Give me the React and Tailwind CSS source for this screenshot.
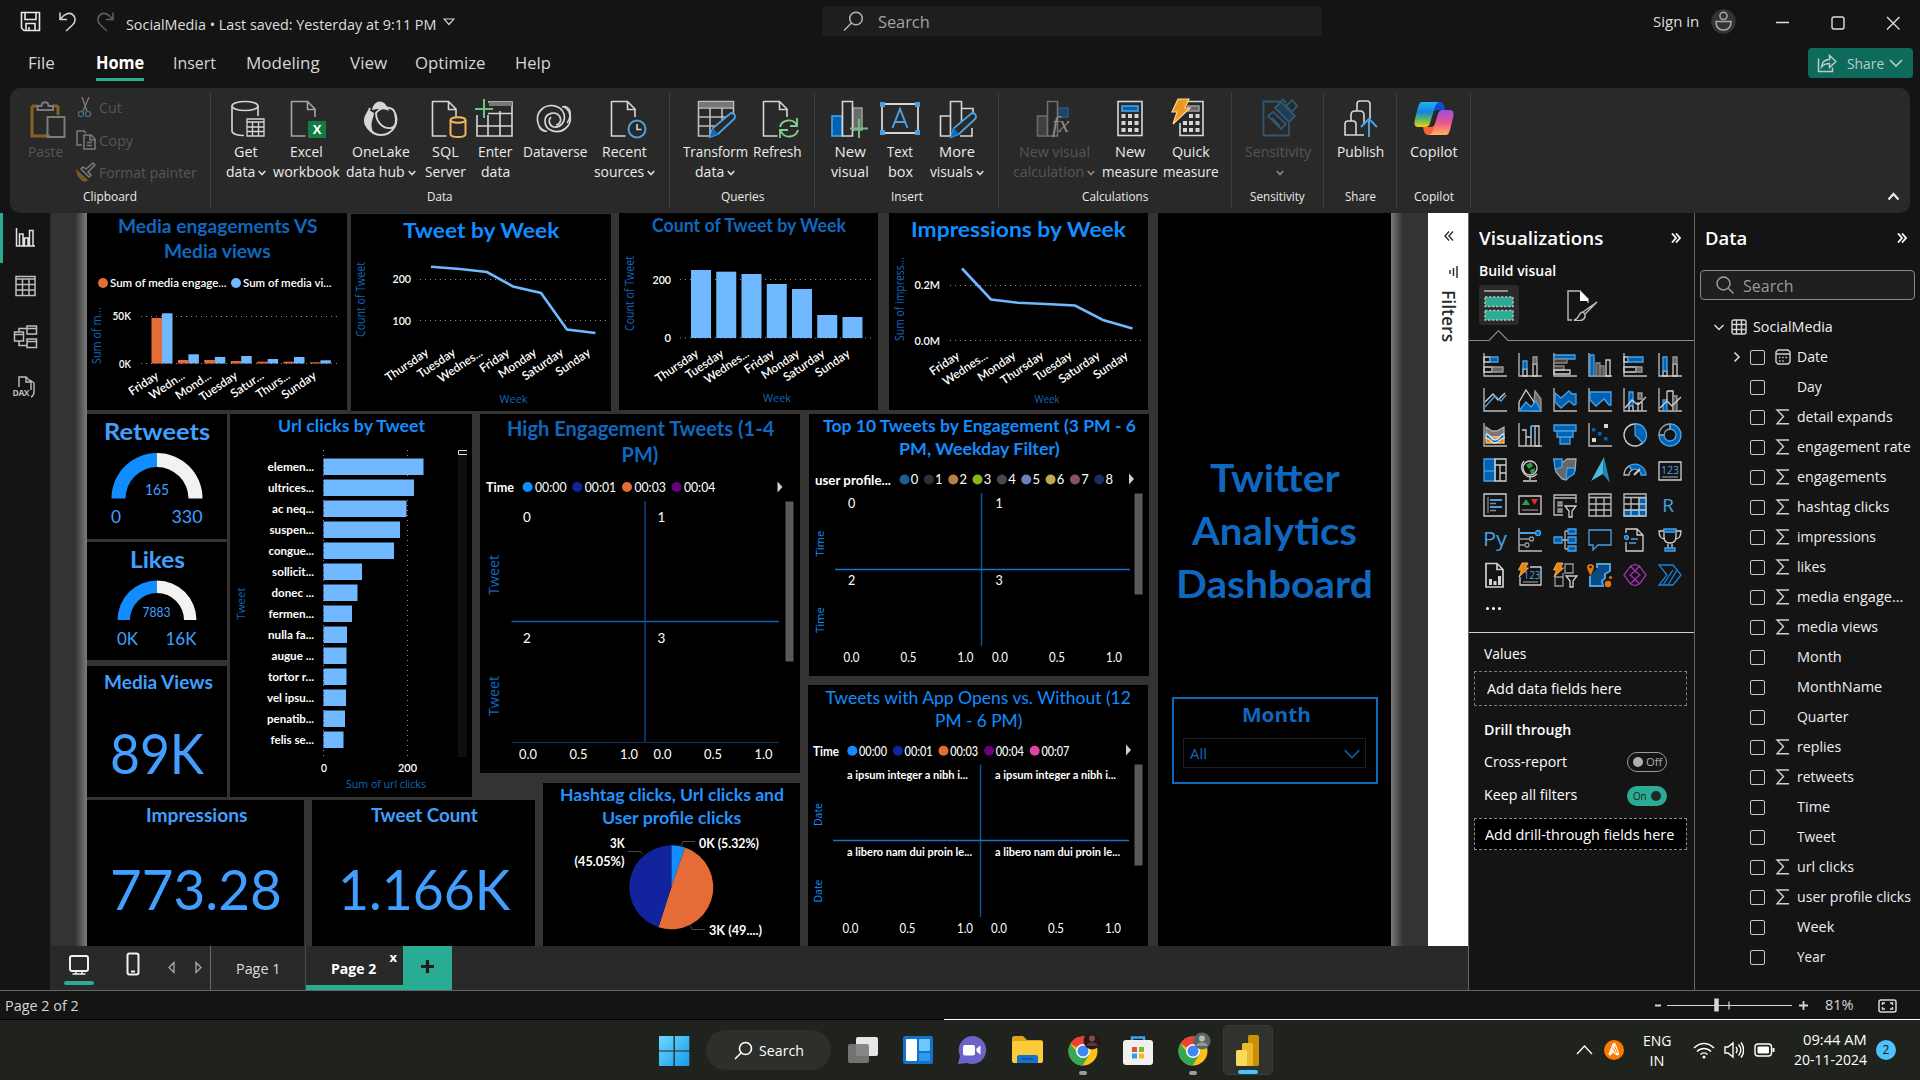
import { useLayoutEffect, useRef, useState } from "react";

const BRIGHT = "#118DFF";
const DIM = "#0F68BE";
const BAR = "#70B8FF";

/* Single-line text condensed or widened to occupy exactly `w` pixels. */
function T({ w, className = "", children }) {
  const ref = useRef(null);
  const [k, setK] = useState(1);
  useLayoutEffect(() => {
    if (ref.current && ref.current.offsetWidth) setK(w / ref.current.offsetWidth);
  }, [w, children]);
  return (
    <span className={"block shrink-0 whitespace-nowrap " + className} style={{ width: w }}>
      <span ref={ref} className="inline-block origin-left" style={{ transform: `scaleX(${k})` }}>
        {children}
      </span>
    </span>
  );
}

/* Text inside a chart; y is the vertical middle of the capitals. */
function X({ x, y, w, s = 12, a = "middle", c = "#fff", b = 600, r, ui, children }) {
  const t = r !== undefined ? `rotate(${r} ${x} ${y})` : undefined;
  return (
    <text
      x={x}
      y={y + s * 0.36}
      fontSize={s}
      fontWeight={b}
      fill={c}
      textAnchor={a}
      textLength={w}
      lengthAdjust="spacingAndGlyphs"
      fontFamily={ui ? "Open Sans, Noto Sans, sans-serif" : "Lato, Open Sans, sans-serif"}
      transform={t}
    >
      {children}
    </text>
  );
}

function Tile({ className, children }) {
  return <div className={"shrink-0 overflow-hidden bg-black flex flex-col items-center font-[Lato,sans-serif] " + className}>{children}</div>;
}

function Plot({ x, y, w, h, children }) {
  return (
    <svg className="block shrink-0" width={w} height={h} viewBox={`${x} ${y} ${w} ${h}`}>
      {children}
    </svg>
  );
}

function Dots({ x1, x2, y }) {
  return <line x1={x1} x2={x2} y1={y} y2={y} stroke="#8a8a8a" strokeWidth="1" strokeDasharray="1 4" />;
}

function DayLabels({ items, x, step, y }) {
  return items.map(([d, w], i) => (
    <X key={i} x={x + i * step} y={y} w={w} a="end" r={-34} s={12} b={600}>
      {d}
    </X>
  ));
}

/* ---------- title bar ---------- */
function TitleBar() {
  return (
    <div className="h-[42px] shrink-0 flex items-start">
      <div className="flex w-[822px] pl-[20px] pt-[11px]">
        <svg width="21" height="21" viewBox="0 0 21 21" fill="none" stroke="#e8e8e8" strokeWidth="1.6">
          <path d="M1.5 1.5h18v18H4L1.500 17z M5 1.500v7h11v-7 M6 19.500v-7h9v7 M9 16v3" />
        </svg>
        <svg className="ml-[17px]" width="20" height="21" viewBox="0 0 20 21" fill="none" stroke="#d0d0d0" strokeWidth="1.6">
          <path d="M2 1.500v7h7 M2.500 8C6 3 11 1 14.500 3.500s3.500 7 0 10.500L8 20" />
        </svg>
        <svg className="ml-[17px]" width="20" height="21" viewBox="0 0 20 21" fill="none" stroke="#5e5e5e" strokeWidth="1.6">
          <path d="M18 1.500v7h-7 M17.500 8C14 3 9 1 5.500 3.500s-3.500 7 0 10.500L12 20" />
        </svg>
        <T w={310} className="ml-[11px] mt-[3px] text-[15px] leading-[21px] text-[#dedede]">SocialMedia • Last saved: Yesterday at 9:11 PM</T>
        <svg className="ml-[7px] mt-[7px]" width="12" height="8" viewBox="0 0 12 8" fill="none" stroke="#cfcfcf" strokeWidth="1.200">
          <path d="M1 1h10L6 6.500z" />
        </svg>
      </div>
      <div className="mt-[6px] flex h-[30px] w-[500px] items-center rounded-[3px] bg-[#1e1e1e] pl-[21px]">
        <svg width="21" height="21" viewBox="0 0 21 21" fill="none" stroke="#b5b5b5" strokeWidth="1.500">
          <circle cx="13" cy="7.500" r="6.300" />
          <path d="M8.500 12L1 19.500" />
        </svg>
        <T w={52} className="ml-[14px] mt-[2px] text-[16px] leading-[22px] text-[#a3a3a3]">Search</T>
      </div>
      <T w={46} className="ml-[331px] mt-[11px] text-[15px] leading-[21px] text-[#dedede]">Sign in</T>
      <svg className="ml-[12px] mt-[9px]" width="25" height="25" viewBox="0 0 25 25" fill="none" stroke="#a8a8a8" strokeWidth="1.500">
        <circle cx="12.500" cy="12.500" r="12.200" fill="#333" stroke="none" />
        <circle cx="12.500" cy="6.800" r="3.600" />
        <path d="M5 12.500h15c0 6-3 8.500-7.500 8.500S5 18.500 5 12.500z" />
      </svg>
      <svg className="ml-[40px] mt-[14px]" width="124" height="18" viewBox="0 0 124 18" fill="none" stroke="#dedede" strokeWidth="1.400">
        <path d="M0 8.500h13 M111 3L123.500 15.500 M123.500 3L111 15.500" />
        <rect x="56" y="3" width="12" height="12" rx="2" />
      </svg>
    </div>
  );
}

function MenuBar() {
  return (
    <div className="h-[46px] shrink-0 flex text-[17px] leading-[24px] text-[#d6d6d6]">
      <T w={27} className="ml-[28px] mt-[9px]">File</T>
      <div className="ml-[41px] mt-[9px] border-b-[3px] border-[#2aac94] h-[30px]">
        <T w={48} className="font-bold text-white">Home</T>
      </div>
      <T w={43} className="ml-[29px] mt-[9px]">Insert</T>
      <T w={74} className="ml-[30px] mt-[9px]">Modeling</T>
      <T w={37} className="ml-[30px] mt-[9px]">View</T>
      <T w={71} className="ml-[28px] mt-[9px]">Optimize</T>
      <T w={36} className="ml-[29px] mt-[9px]">Help</T>
      <div className="ml-[1257px] mt-[6px] flex h-[30px] w-[105px] items-center rounded-[4px] bg-[#0e6a5a] pl-[9px]">
        <svg width="20" height="20" viewBox="0 0 20 20" fill="none" stroke="#b9cdc9" strokeWidth="1.500">
          <path d="M1.500 5.500v13h14v-4 M4.500 14c.5-5 3.500-7.500 8-7.500V2.500l6.500 6-6.500 6V10.500c-4 0-6 1-8 3.500z" />
        </svg>
        <T w={37} className="ml-[10px] -mt-[1px] text-[15px] leading-[22px] text-[#b9cdc9]">Share</T>
        <svg className="ml-[5px] mt-[1px]" width="14" height="9" viewBox="0 0 14 9" fill="none" stroke="#b9cdc9" strokeWidth="1.600">
          <path d="M1 1l6 6 6-6" />
        </svg>
      </div>
    </div>
  );
}

/* ---------- ribbon ---------- */
const Caret = ({ c = "#dcdcdc" }) => (
  <svg className="ml-[3px] mt-[3px] shrink-0" width="8" height="6" viewBox="0 0 8 6" fill="none" stroke={c} strokeWidth="1.600">
    <path d="M.7 1L4 4.600 7.300 1" />
  </svg>
);

function RB({ ml, w, a, aw, b, bw, caret, off, icon }) {
  const col = off ? "text-[#565656]" : "text-[#ebebeb]";
  return (
    <div className={"shrink-0 flex flex-col items-center text-[15px] leading-[20px] " + col} style={{ marginLeft: ml, width: w }}>
      <svg width="44" height="42" viewBox="0 0 44 42" fill="none" stroke="#d6d6d6" strokeWidth="1.600" className="mb-[3px] mt-[3px] shrink-0 overflow-visible">
        {icon}
      </svg>
      <T w={aw}>{a}</T>
      <div className="flex items-center h-[20px]">
        {b && <T w={bw}>{b}</T>}
        {caret && <Caret c={off ? "#8a8a8a" : "#dcdcdc"} />}
      </div>
    </div>
  );
}

function Group({ w, name, nw, children }) {
  return (
    <div className="shrink-0 flex h-[115px] flex-col border-r border-[#3e3e3e]" style={{ width: w }}>
      <div className="flex h-[93px]">{children}</div>
      <div className="flex justify-center">
        <T w={nw} className="text-[13px] leading-[20px] text-[#ebebeb]">{name}</T>
      </div>
    </div>
  );
}

const docPath = "M7.500 5.500h16l7.500 7.500v8 M23.500 5.500v8H31 M7.500 5v35h14";

function Ribbon() {
  return (
    <div className="mx-[10px] h-[125px] shrink-0 flex rounded-[10px] bg-[#292929] pt-[5px] relative z-10">
      <Group w={201} name="Clipboard" nw={54}>
        <div className="ml-[16px] flex w-[38px] flex-col items-center text-[15px] leading-[20px] text-[#565656]">
          <svg width="38" height="42" viewBox="0 0 38 42" fill="none" strokeWidth="2" className="relative left-[3px] mb-[3px] mt-[3px] shrink-0">
            <path d="M3 10v30h18 M29 10v9" stroke="#8a6125" strokeWidth="3" />
            <path d="M3 10h6 M23 10h6" stroke="#8a6125" strokeWidth="3" />
            <path d="M8.500 14V10h4c0-5 7-5 7 0h4.500v4z" stroke="#7b7b7b" />
            <rect x="18.500" y="21" width="17" height="20" stroke="#7b7b7b" />
          </svg>
          <T w={35}>Paste</T>
        </div>
        <div className="ml-[12px] flex flex-col text-[15px] leading-[20px] text-[#565656]">
          <div className="mt-[4px] flex h-[20px] items-center">
            <svg width="20" height="20" viewBox="0 0 20 20" fill="none" strokeWidth="1.400">
              <path d="M6 0l5 14 M13 0L7 14" stroke="#7b7b7b" />
              <circle cx="5" cy="17" r="2.600" stroke="#3e6d8e" />
              <circle cx="12" cy="17" r="2.600" stroke="#3e6d8e" />
            </svg>
            <T w={23} className="ml-[3px]">Cut</T>
          </div>
          <div className="mt-[13px] flex h-[20px] items-center">
            <svg width="20" height="20" viewBox="0 0 20 20" fill="none" stroke="#7b7b7b" strokeWidth="1.500">
              <path d="M6 15H1V1h7l2 2 M8 19V5h7l4 4v10z M14 5v5h5 M11 12.500h5 M11 15.500h5" />
            </svg>
            <T w={34} className="ml-[3px]">Copy</T>
          </div>
          <div className="mt-[12px] flex h-[20px] items-center">
            <svg width="20" height="20" viewBox="0 0 20 20" fill="none" strokeWidth="1.500">
              <path d="M1 9l10 9-2 1c-4-1-7-5-8-10z" fill="#7d5a2a" stroke="#7d5a2a" />
              <path d="M5 7l8 8 2-2-3-3 7-7-2-2-7 6-3-2z" stroke="#7b7b7b" />
            </svg>
            <T w={98} className="ml-[3px]">Format painter</T>
          </div>
        </div>
      </Group>

      <Group w={459} name="Data" nw={26}>
        <RB ml={10} w={50} a="Get" aw={24} b="data" bw={29} caret icon={
          <g>
            <ellipse cx="21" cy="10" rx="13" ry="4.500" />
            <path d="M8 10v25c0 2.500 5 4.500 12 4.500 M34 10v10" />
            <path d="M23 23h17v17H23z M23 26h17 M23 31h17 M23 35.500h17 M28.500 26v14 M34.500 26v14" strokeWidth="1.300" />
          </g>} />
        <RB ml={0} w={70} a="Excel" aw={33} b="workbook" bw={67} icon={
          <g>
            <path d={docPath} stroke="#a5a5a5" />
            <rect x="24" y="25" width="18" height="17" fill="#127c41" stroke="none" />
            <text x="33" y="38" fontSize="13" fontWeight="700" fill="#fff" stroke="none" textAnchor="middle" fontFamily="Open Sans">X</text>
          </g>} />
        <RB ml={2} w={75} a="OneLake" aw={58} b="data hub" bw={59} caret icon={
          <g>
            <path d="M13 14c2-11 13-12 17 1-6-3-12-2-17-1z" fill="#d6d6d6" stroke="none" />
            <path d="M10 14c-9 9-5 19 6 25-7-10-1-17-1-22z" fill="#d6d6d6" stroke="none" />
            <path d="M11 12C3 26 11 39 22 39s20-12 13-24c-3-5-14-4-18 2 0 8 6 16 15 15 5-1 6-7 4-14" strokeWidth="1.900" />
          </g>} />
        <RB ml={2} w={50} a="SQL" aw={27} b="Server" bw={41} icon={
          <g transform="translate(2 0)">
            <path d={docPath} />
            <ellipse cx="33" cy="24" rx="7.500" ry="2.800" stroke="#f0b45c" strokeWidth="2" />
            <path d="M25.500 24v14c0 4 15 4 15 0V24" stroke="#f0b45c" strokeWidth="2" />
          </g>} />
        <RB ml={-1} w={52} a="Enter" aw={34} b="data" bw={29} icon={
          <g>
            <path d="M4 19v21h35V6H15 M4 30h35 M15 19v21 M27 15v25 M15 17.500h24" />
            <path d="M16 6h23v4H16z" fill="#777" stroke="none" />
            <path d="M11 3v19 M2 13h18" stroke="#6fc37c" strokeWidth="2" />
          </g>} />
        <RB ml={-1} w={70} a="Dataverse" aw={65} icon={
          <g>
            <path d="M31 11c7 3 9 15 2 21-8 7-21 3-21-7 0-8 11-11 15-4 2 4-1 8-4 8" strokeWidth="1.700" />
            <path d="M12 35c-9-4-10-16-3-22 7-6 19-4 22 5 2 8-4 14-10 13-5-1-6-7-3-10" strokeWidth="1.700" />
            <path d="M29 11c3-1 7 0 8 4s-1 10-3 12 M14 35c-3 1-7-1-8-5" strokeWidth="1.500" />
          </g>} />
        <RB ml={0} w={69} a="Recent" aw={45} b="sources" bw={50} caret icon={
          <g transform="translate(1 0)">
            <path d={docPath} />
            <circle cx="33" cy="33" r="8.500" stroke="#4ba0e0" strokeWidth="2" />
            <path d="M33 28v5.500h4.500" />
          </g>} />
      </Group>

      <Group w={145} name="Queries" nw={43}>
        <RB ml={10} w={70} a="Transform" aw={65} b="data" bw={29} caret icon={
          <g transform="translate(1 0)">
            <path d="M4.500 5.500h35v14 M4.500 5v35h13 M4.500 12h35 M4.500 21h30 M4.500 30h20 M16 12v28 M28 12v14" stroke="#bdbdbd" />
            <path d="M5 6h34v5H5z" fill="#777" stroke="none" />
            <path d="M16 41l3-9 18-15c4 0 5 4 3 6L24 38z" fill="#292929" stroke="#4ba0e0" strokeWidth="1.800" />
            <path d="M16 41l3-9 5 6z" fill="#0d6cbd" stroke="none" />
          </g>} />
        <RB ml={1} w={52} a="Refresh" aw={49} icon={
          <g transform="translate(1 0)">
            <path d={docPath} />
            <path d="M24 31c2-8 14-9 17-1 M41 22v8h-7 M42 34c-2 8-14 9-17 1 M24 42v-8h8" stroke="#7fd18d" strokeWidth="1.800" />
          </g>} />
      </Group>

      <Group w={184} name="Insert" nw={32}>
        <RB ml={13} w={44} a="New" aw={31} b="visual" bw={38} icon={
          <g>
            <rect x="4" y="20" width="10" height="20" fill="#0062b4" stroke="#4ba0e0" />
            <rect x="25" y="12" width="9" height="22" fill="#6b6b6b" stroke="#999" />
            <path d="M14.500 40V5.500h10V40z" fill="#292929" />
            <path d="M31 23v19 M22 32.500h18" stroke="#6fc37c" strokeWidth="2" />
          </g>} />
        <RB ml={6} w={44} a="Text" aw={26} b="box" bw={25} icon={
          <g>
            <path d="M4 8h36v29H4z" strokeWidth="1.800" />
            <path d="M2 6h5v5H2z M37 6h5v5h-5z M2 34h5v5H2z M37 34h5v5h-5z" fill="#4ba0e0" stroke="none" />
            <path d="M14.500 32l7.500-19 7.500 19 M17 26h10" stroke="#4ba0e0" strokeWidth="2" />
          </g>} />
        <RB ml={7} w={56} a="More" aw={36} b="visuals" bw={43} caret icon={
          <g transform="translate(1 0)">
            <path d="M14.500 40H4.500V20h10 M14.500 40V5.500h11V26 M26 12.500h11v6 M24 40h12v-8" />
            <path d="M15 41l3-9 18-15c4 0 5 4 3 6L23 38z" fill="#292929" stroke="#4ba0e0" strokeWidth="1.800" />
            <path d="M15 41l3-9 5 6z" fill="#0d6cbd" stroke="none" />
          </g>} />
      </Group>

      <Group w={233} name="Calculations" nw={66}>
        <RB ml={13} w={84} off a="New visual" aw={71} b="calculation" bw={71} caret icon={
          <g transform="translate(1 0)">
            <rect x="4.500" y="20" width="10" height="20" fill="#3f3f3f" stroke="#6a6a6a" />
            <rect x="25" y="12" width="10" height="9" fill="#1d4468" stroke="#28567d" />
            <path d="M14.500 40V5.500h10V40z" fill="#292929" stroke="#6f6f6f" />
            <text x="19" y="36" fontSize="24" fontStyle="italic" fill="#8b8b8b" stroke="none" fontFamily="Liberation Serif">fx</text>
          </g>} />
        <RB ml={4} w={60} a="New" aw={30} b="measure" bw={56} icon={
          <g>
            <rect x="10" y="5.500" width="24" height="34" />
            <rect x="14" y="10" width="16" height="5" fill="#0062b4" stroke="#4ba0e0" />
            <path d="M13.500 18h4v4h-4z M20 18h4v4h-4z M26.500 18h4v4h-4z M13.500 25h4v4h-4z M20 25h4v4h-4z M26.500 25h4v4h-4z M13.500 32h4v4h-4z M20 32h4v4h-4z M26.500 32h4v4h-4z" fill="#d6d6d6" stroke="none" />
          </g>} />
        <RB ml={1} w={60} a="Quick" aw={38} b="measure" bw={56} icon={
          <g>
            <path d="M18 5.500h16v34H11V27" />
            <rect x="19" y="10" width="11" height="5" fill="#666" stroke="#999" />
            <path d="M14 25h4v4h-4z M20 18h4v4h-4z M26.500 18h4v4h-4z M20 25h4v4h-4z M26.500 25h4v4h-4z M14 32h4v4h-4z M20 32h4v4h-4z M26.500 32h4v4h-4z" fill="#d6d6d6" stroke="none" />
            <path d="M9 3h11l-4 9h5L4 28l4-12H3z" fill="#ec9823" stroke="#ffd990" strokeWidth="1.200" />
          </g>} />
      </Group>

      <Group w={92} name="Sensitivity" nw={55}>
        <RB ml={9} w={74} off a="Sensitivity" aw={66} caret icon={
          <g stroke="#2f5873" strokeWidth="1.800" transform="translate(2 0)">
            <path d="M24 5.500H5.500v34H31V27" />
            <path d="M10 20l5-4 13 12-5 5z M14 22l8 8" />
            <path d="M17 12l6-6 14 14-6 6z" fill="#203e52" />
            <path d="M28 10l6-6 5 6-5 6z M24 3l4 4" />
          </g>} />
      </Group>
      <Group w={73} name="Share" nw={31}>
        <RB ml={11} w={50} a="Publish" aw={47} icon={
          <g transform="translate(2 0)">
            <path d="M5 39V28c0-2 1-3 3-3h5c2 0 3 1 3 3v11z M11 25v-6c0-3 2-4 4-4h5c2 0 4 1 4 4v9 M17 15V8c0-2 1-3 3-3h7c2 0 3 1 3 3v15 M16 39h8" />
            <path d="M29 41V23 M21 31l8-8 8 8" stroke="#4ba0e0" strokeWidth="2" />
          </g>} />
      </Group>
      <Group w={74} name="Copilot" nw={40}>
        <RB ml={12} w={50} a="Copilot" aw={48} icon={
          <g stroke="none">
            <defs>
              <linearGradient id="cpA" x1="0" y1="0" x2="0" y2="1">
                <stop offset="0" stopColor="#22b4f5" /><stop offset=".4" stopColor="#1583e0" /><stop offset=".7" stopColor="#5cb861" /><stop offset="1" stopColor="#f7d10a" />
              </linearGradient>
              <linearGradient id="cpB" x1="0" y1="0" x2="0" y2="1">
                <stop offset="0" stopColor="#9b4fe8" /><stop offset=".5" stopColor="#e8558c" /><stop offset="1" stopColor="#ffb35a" />
              </linearGradient>
            </defs>
            <path d="M22 6h6c3 0 4 2 5 8h-7c-4 0-5 2-6 5z" fill="#0b50d0" />
            <path d="M22 39h-6c-3 0-4-3-5-8h8c3 0 4-3 5-6z" fill="#f4623a" />
            <path d="M10 6h17c-3 1-4 4-5 8l-4 13c-1 3-2 4-5 4H6c-4 0-4-4-3-8l3-12c1-3 2-5 4-5z" fill="url(#cpA)" />
            <path d="M34 39H17c3-1 4-4 5-8l4-13c1-3 2-4 5-4h7c4 0 4 4 3 8l-3 12c-1 3-2 5-4 5z" fill="url(#cpB)" />
          </g>} />
      </Group>
      <div className="flex flex-1 items-end justify-end pb-[12px] pr-[10px]">
        <svg width="13" height="9" viewBox="0 0 13 9" fill="none" stroke="#e8e8e8" strokeWidth="2.200">
          <path d="M1.500 7.500l5-5.500 5 5.500" />
        </svg>
      </div>
    </div>
  );
}

/* ---------- left rail ---------- */
function Rail() {
  return (
    <div className="w-[51px] shrink-0 border-r border-[#2c2c2c] flex flex-col">
      <div className="flex h-[50px] border-l-[3px] border-[#2aac94] pl-[12px] pt-[14px]">
        <svg width="22" height="22" viewBox="0 0 22 22" fill="none" stroke="#e0e0e0" strokeWidth="1.500">
          <path d="M1.500 1v18H20 M4.500 19V7h3.500v12 M9.500 19v-8H13v8 M14.500 19V3.500H18V19" />
        </svg>
      </div>
      <svg className="ml-[15px] mt-[12px]" width="21" height="22" viewBox="0 0 21 22" fill="none" stroke="#bdbdbd" strokeWidth="1.500">
        <path d="M1 1.500h19v19H1z M1 4h19 M1 9.500h19 M1 15h19 M7.500 4v16 M14 4v16" />
      </svg>
      <svg className="ml-[13px] mt-[27px]" width="25" height="25" viewBox="0 0 25 25" fill="none" stroke="#bdbdbd" strokeWidth="1.500">
        <path d="M1.500 8h9v9h-9z M1.500 10.500h9 M14 2h9.500v8H14z M14 4.500h9.500 M14 15h9.500v8.500H14z M14 17.500h9.500 M6 8V4.500h8 M6 17v4.500h8" />
      </svg>
      <svg className="ml-[12px] mt-[26px]" width="26" height="26" viewBox="0 0 26 26" fill="none" stroke="#bdbdbd" strokeWidth="1.400">
        <path d="M7 12V2h7l5 5v8 M14 2v5h5 M18 5l4 3v9c0 3-1 4-3 5" />
        <text x="0.500" y="20.500" fontSize="8.500" fontWeight="700" fill="#bdbdbd" stroke="none" textLength="17" fontFamily="Open Sans">DAX</text>
      </svg>
    </div>
  );
}

/* ---------- report visuals ---------- */
function MediaChart() {
  const or = [318, 360, 360, 361, 361.7, 361.7, 362.3];
  const bl = [313.300, 354.300, 357, 356, 359, 357, 360.300];
  return (
    <Tile className="w-[260px] h-[197px]">
      <T w={199} className="text-[19px] font-bold leading-[25px] text-[#0f68be]">Media engagements VS</T>
      <T w={107} className="text-[19px] font-bold leading-[25px] text-[#0f68be]">Media views</T>
      <div className="mt-[10px] flex h-[20px] w-full items-center pl-[11px] text-[12px] font-semibold text-white">
        <span className="size-[10px] rounded-full bg-[#e66c37]" />
        <T w={116} className="ml-[2px]">Sum of media engage...</T>
        <span className="ml-[5px] size-[10px] rounded-full bg-[#70b8ff]" />
        <T w={88} className="ml-[2px]">Sum of media vi...</T>
      </div>
      <Plot x={87} y={293} w={260} h={117}>
        <X x={97} y={335.500} w={57} r={-90} s={12} c={DIM} b={400} ui>Sum of m...</X>
        <X x={131} y={316} w={18.500} a="end">50K</X>
        <X x={131} y={364} w={12} a="end">0K</X>
        <Dots x1={141} x2={341} y={316.500} />
        <Dots x1={141} x2={341} y={363.500} />
        {or.map((t, i) => <rect key={i} x={151.500 + i * 26.400} y={t} width="10.500" height={363.500 - t} fill="#E66C37" />)}
        {bl.map((t, i) => <rect key={i} x={162 + i * 26.400} y={t} width="10.500" height={363.500 - t} fill={BAR} />)}
        <DayLabels x={157} step={26.300} y={374} items={[["Friday", 33], ["Wedn...", 40], ["Mond...", 40], ["Tuesday", 43], ["Satur...", 37], ["Thurs...", 38], ["Sunday", 39]]} />
      </Plot>
    </Tile>
  );
}

const WEEK_A = [["Thursday", 49], ["Tuesday", 43], ["Wednes...", 51], ["Friday", 33], ["Monday", 43], ["Saturday", 47], ["Sunday", 39]];

function TweetWeek() {
  return (
    <Tile className="mt-px w-[260px] h-[197px]">
      <T w={156} className="mt-[2px] text-[21px] font-bold leading-[28px] text-[#118dff]">Tweet by Week</T>
      <Plot x={351} y={244} w={260} h={167}>
        <X x={361} y={299.500} w={75} r={-90} s={12} c={DIM} b={400} ui>Count of Tweet</X>
        <X x={411} y={279} w={18.500} a="end">200</X>
        <X x={411} y={321} w={18.500} a="end">100</X>
        <Dots x1={420} x2={606} y={279.500} />
        <Dots x1={420} x2={606} y={320.500} />
        <path d="M431 266.700L460 269 487 272 513 286.500 541 293 567 329.500 595.500 333" fill="none" stroke={BAR} strokeWidth="2.600" />
        <DayLabels x={427} step={27} y={351} items={WEEK_A} />
        <X x={513.500} y={399} w={28} s={11} c={DIM} b={400} ui>Week</X>
      </Plot>
    </Tile>
  );
}

function CountWeek() {
  const tops = [270, 271.700, 274, 284, 289, 315, 317];
  return (
    <Tile className="w-[259px] h-[197px]">
      <T w={194} className="mt-px text-[18px] font-bold leading-[23px] text-[#0f68be]">Count of Tweet by Week</T>
      <Plot x={619} y={237} w={259} h={173}>
        <X x={630} y={293.500} w={75} r={-90} s={12} c={DIM} b={400} ui>Count of Tweet</X>
        <X x={671} y={280} w={18.500} a="end">200</X>
        <X x={671} y={338} w={6.500} a="end">0</X>
        <Dots x1={680} x2={871} y={279.500} />
        <Dots x1={680} x2={871} y={338} />
        {tops.map((t, i) => <rect key={i} x={691 + i * 25.250} y={t} width="20" height={338 - t} fill={BAR} />)}
        <DayLabels x={697} step={25.250} y={352} items={WEEK_A} />
        <X x={777} y={398} w={28} s={11} c={DIM} b={400} ui>Week</X>
      </Plot>
    </Tile>
  );
}

function ImprWeek() {
  return (
    <Tile className="w-[259px] h-[197px]">
      <T w={215} className="mt-[2px] text-[21px] font-bold leading-[28px] text-[#118dff]">Impressions by Week</T>
      <Plot x={889} y={243} w={259} h={167}>
        <X x={900} y={299} w={84} r={-90} s={12} c={DIM} b={400} ui>Sum of impress...</X>
        <X x={940} y={285} w={25.500} a="end">0.2M</X>
        <X x={940} y={341} w={25.500} a="end">0.0M</X>
        <Dots x1={950} x2={1141} y={285.500} />
        <Dots x1={950} x2={1141} y={340.500} />
        <path d="M962 268.500L991 299.500 1018 302.700 1046 304 1075 305.500 1103 320 1132.500 328.500" fill="none" stroke={BAR} strokeWidth="2.600" />
        <DayLabels x={958} step={28.100} y={354} items={[WEEK_A[3], WEEK_A[2], WEEK_A[4], WEEK_A[0], WEEK_A[1], WEEK_A[5], WEEK_A[6]]} />
        <X x={1047} y={399} w={25} s={11} c={DIM} b={400} ui>Week</X>
      </Plot>
    </Tile>
  );
}

function Arc({ cx, cy, R, r }) {
  return (
    <g>
      <path d={`M${cx - R} ${cy}A${R} ${R} 0 0 1 ${cx} ${cy - R}V${cy - r}A${r} ${r} 0 0 0 ${cx - r} ${cy}z`} fill={BRIGHT} />
      <path d={`M${cx + R} ${cy}A${R} ${R} 0 0 0 ${cx} ${cy - R}V${cy - r}A${r} ${r} 0 0 1 ${cx + r} ${cy}z`} fill="#f3f2f1" />
    </g>
  );
}

const CARD = "#41A0FF";

function Kpis() {
  return (
    <div className="flex w-[140px] shrink-0 flex-col">
      <Tile className="w-[140px] h-[125px]">
        <T w={106} className="mt-[3px] text-[23px] font-bold leading-[28px] text-[#41a0ff]">Retweets</T>
        <Plot x={87} y={445} w={140} h={94}>
          <Arc cx={157} cy={498.500} R={45.500} r={31.500} />
          <X x={157} y={490} w={24} s={14.500} c={CARD} b={400}>165</X>
          <X x={116} y={517} w={10} s={18} c={CARD} b={400}>0</X>
          <X x={187} y={517} w={31} s={18} c={CARD} b={400}>330</X>
        </Plot>
      </Tile>
      <Tile className="mt-[3px] w-[140px] h-[118px]">
        <T w={55} className="mt-[3px] text-[23px] font-bold leading-[28px] text-[#41a0ff]">Likes</T>
        <Plot x={87} y={573} w={140} h={87}>
          <Arc cx={157} cy={620} R={39.500} r={27} />
          <X x={156.500} y={612} w={28} s={13} c={CARD} b={400}>7883</X>
          <X x={127.500} y={638.500} w={21} s={17} c={CARD} b={400}>0K</X>
          <X x={181} y={638.500} w={31} s={17} c={CARD} b={400}>16K</X>
        </Plot>
      </Tile>
      <Tile className="mt-[6px] w-[140px] h-[131px]">
        <T w={109} className="mt-[4px] ml-[3px] text-[18px] font-bold leading-[24px] text-[#41a0ff]">Media Views</T>
        <T w={94} className="mt-[24px] text-[56px] leading-[70px] text-[#41a0ff]">89K</T>
      </Tile>
    </div>
  );
}

const URLS = [
  ["elemen...", 46.500, 423.500], ["ultrices...", 46, 414], ["ac neq...", 42, 406.500], ["suspen...", 44.500, 400], ["congue...", 45.500, 394],
  ["sollicit...", 42, 362], ["donec ...", 42.500, 357.500], ["fermen...", 45.500, 352], ["nulla fa...", 46, 347], ["augue ...", 42.500, 346.500],
  ["tortor r...", 46, 346.500], ["vel ipsu...", 47, 346], ["penatib...", 47, 345], ["felis se...", 43.500, 343.500],
];

function UrlChart() {
  return (
    <Tile className="ml-[3px] w-[242px] h-[383px]">
      <T w={147} className="text-[17.5px] font-bold leading-[23px] text-[#118dff]">Url clicks by Tweet</T>
      <Plot x={230} y={437} w={242} h={360}>
        <X x={240.500} y={603.500} w={32} r={-90} s={11.500} c={DIM} b={400} ui>Tweet</X>
        <line x1="323.500" x2="323.500" y1="450" y2="758" stroke="#8a8a8a" strokeDasharray="1 4" />
        <line x1="407.500" x2="407.500" y1="450" y2="758" stroke="#8a8a8a" strokeDasharray="1 4" />
        {URLS.map(([t, w, e], i) => (
          <g key={i}>
            <X x={314} y={466.700 + i * 21} w={w} a="end" b={700}>{t}</X>
            <rect x="323.500" y={458.500 + i * 21} width={e - 323.500} height="16.500" fill={BAR} />
          </g>
        ))}
        <rect x="458" y="450" width="9" height="307" fill="#0e0e0e" />
        <path d="M467 450.500h-8.500v4H467" fill="none" stroke="#ddd" />
        <X x={324} y={768} w={6}>0</X>
        <X x={407.500} y={768} w={19}>200</X>
        <X x={386} y={784} w={80} s={11} c={DIM} b={400} ui>Sum of url clicks</X>
      </Plot>
    </Tile>
  );
}

function Card({ className, title, tw, value, vw }) {
  return (
    <Tile className={className}>
      <T w={tw} className="mt-[3px] ml-[2px] text-[18px] font-bold leading-[24px] text-[#41a0ff]">{title}</T>
      <T w={vw} className="mt-[27px] text-[56px] leading-[70px] text-[#41a0ff]">{value}</T>
    </Tile>
  );
}

const TIME_COLORS = ["#118DFF", "#12239E", "#E66C37", "#6B007B", "#E044A7"];
const TIMES = ["00:00", "00:01", "00:03", "00:04", "00:07"];

function Arrow({ x, y }) {
  return <path d={`M${x} ${y - 5.500}v11l5-5.500z`} fill="#d0d0d0" />;
}

function Grid4({ vx, y1, y2, hx1, hx2, hy, ticks, ty, s, tw, c }) {
  return (
    <g>
      <line x1={vx} x2={vx} y1={y1} y2={y2} stroke={c} strokeWidth="1.400" opacity=".75" />
      <line x1={hx1} x2={hx2} y1={hy} y2={hy} stroke={c} strokeWidth="1.400" />
      {ticks.map((x, i) => <X key={i} x={x} y={ty} w={tw} s={s} b={400}>{["0.0", "0.5", "1.0"][i % 3]}</X>)}
    </g>
  );
}

function HighEngagement() {
  return (
    <Tile className="w-[320px] h-[359px]">
      <T w={267} className="mt-px text-[20px] font-bold leading-[26px] text-[#0f68be]">High Engagement Tweets (1-4</T>
      <T w={37} className="text-[20px] font-bold leading-[26px] text-[#0f68be]">PM)</T>
      <Plot x={480} y={467} w={320} h={306}>
        <X x={486} y={487.500} w={28} a="start" s={13.500} b={700}>Time</X>
        {[527.600, 577.300, 627, 676.500].map((x, i) => (
          <g key={i}>
            <circle cx={x} cy={487} r="5" fill={TIME_COLORS[i]} />
            <X x={x + 7.400} y={487.500} w={31.500} a="start" s={13.500} b={400}>{TIMES[i]}</X>
          </g>
        ))}
        <Arrow x={777.500} y={487} />
        <Grid4 vx={645} y1={501} y2={742.600} hx1={511.500} hx2={779} hy={621.500} ticks={[528, 578.500, 629, 662.500, 713, 763.500]} ty={754.500} s={13.500} tw={18} c="#1062b3" />
        <line x1="511.500" x2="779" y1="742.500" y2="742.500" stroke="#0b3763" />
        <X x={527} y={517.500} s={13.500} b={400}>0</X>
        <X x={661.500} y={517.500} s={13.500} b={400}>1</X>
        <X x={527} y={638.500} s={13.500} b={400}>2</X>
        <X x={661.500} y={638.500} s={13.500} b={400}>3</X>
        <X x={494} y={575} w={40} r={-90} s={14} c={DIM} b={400} ui>Tweet</X>
        <X x={494} y={696} w={40} r={-90} s={14} c={DIM} b={400} ui>Tweet</X>
        <rect x="785.500" y="501.500" width="8" height="160" fill="#5a5a5a" />
      </Plot>
    </Tile>
  );
}

const UP_COLORS = ["#1B5E93", "#2B2F3A", "#B98046", "#8AB51E", "#454852", "#6E80BB", "#C0A850", "#87535F", "#1D2C60"];

function TopTen() {
  return (
    <Tile className="ml-px w-[340px] h-[262px]">
      <T w={313} className="text-[17.5px] font-bold leading-[23px] text-[#118dff]">Top 10 Tweets by Engagement (3 PM - 6</T>
      <T w={161} className="text-[17.5px] font-bold leading-[23px] text-[#118dff]">PM, Weekday Filter)</T>
      <Plot x={809} y={460} w={340} h={216}>
        <X x={815} y={480} w={76} a="start" s={12.500} b={700}>user profile...</X>
        {UP_COLORS.map((c, i) => (
          <g key={i}>
            <circle cx={904.500 + i * 24.350} cy={479.500} r="5" fill={c} />
            <X x={914.500 + i * 24.350} y={479.500} s={13} b={400}>{i}</X>
          </g>
        ))}
        <Arrow x={1129} y={479} />
        <Grid4 vx={981.500} y1={493} y2={646} hx1={835} hx2={1130} hy={569.500} ticks={[851.500, 908.500, 965.500, 1000, 1057, 1114]} ty={657.200} s={12.500} tw={16} c="#1273d0" />
        <X x={851.500} y={503} s={12.500} b={400}>0</X>
        <X x={999} y={503} s={12.500} b={400}>1</X>
        <X x={851.500} y={580.200} s={12.500} b={400}>2</X>
        <X x={999} y={580.200} s={12.500} b={400}>3</X>
        <X x={820} y={543.500} w={26} r={-90} s={11.500} c={BRIGHT} b={400} ui>Time</X>
        <X x={820} y={620} w={26} r={-90} s={11.500} c={BRIGHT} b={400} ui>Time</X>
        <rect x="1134.500" y="493.500" width="8" height="101" fill="#5a5a5a" />
      </Plot>
    </Tile>
  );
}

function AppOpens() {
  return (
    <Tile className="mt-[9px] w-[340px] h-[261px]">
      <T w={305} className="mt-[1px] text-[17.5px] leading-[23px] text-[#118dff]">Tweets with App Opens vs. Without (12</T>
      <T w={87} className="text-[17.5px] leading-[23px] text-[#118dff]">PM - 6 PM)</T>
      <Plot x={808} y={732} w={340} h={214}>
        <X x={813} y={751} w={26} a="start" s={12.500} b={700}>Time</X>
        {TIMES.map((t, i) => (
          <g key={i}>
            <circle cx={852.300 + i * 45.600} cy={750.800} r="5" fill={TIME_COLORS[i]} />
            <X x={859 + i * 45.600} y={751} w={28} a="start" s={12.500} b={500}>{t}</X>
          </g>
        ))}
        <Arrow x={1126} y={750} />
        <Grid4 vx={980.500} y1={764.500} y2={917} hx1={833} hx2={1129} hy={840.500} ticks={[850.500, 907.500, 965, 999, 1056, 1113]} ty={928} s={12.500} tw={16} c="#1273d0" />
        <X x={847} y={774.500} w={121} a="start" s={11.500} b={700}>a ipsum integer a nibh i...</X>
        <X x={995} y={774.500} w={121} a="start" s={11.500} b={700}>a ipsum integer a nibh i...</X>
        <X x={847} y={851.500} w={125} a="start" s={11.500} b={700}>a libero nam dui proin le...</X>
        <X x={995} y={851.500} w={125} a="start" s={11.500} b={700}>a libero nam dui proin le...</X>
        <X x={818} y={814.500} w={23} r={-90} s={11.500} c={BRIGHT} b={400} ui>Date</X>
        <X x={818} y={891} w={23} r={-90} s={11.500} c={BRIGHT} b={400} ui>Date</X>
        <rect x="1134.500" y="764.500" width="8" height="101" fill="#5a5a5a" />
      </Plot>
    </Tile>
  );
}

function PieTile() {
  const cx = 671.300, cy = 887.300, R = 42;
  const pt = (f) => [cx + R * Math.sin(2 * Math.PI * f), cy - R * Math.cos(2 * Math.PI * f)].join(" ");
  const a = 0.0532, b = 0.5495;
  return (
    <Tile className="ml-auto mt-[10px] w-[257px] h-[163px]">
      <T w={224} className="text-[17.5px] font-bold leading-[23px] text-[#2492ff]">Hashtag clicks, Url clicks and</T>
      <T w={139} className="text-[17.5px] font-bold leading-[23px] text-[#2492ff]">User profile clicks</T>
      <Plot x={543} y={829} w={257} h={117}>
        <path d={`M${cx} ${cy}L${pt(0)}A${R} ${R} 0 0 1 ${pt(a)}z`} fill={BRIGHT} />
        <path d={`M${cx} ${cy}L${pt(a)}A${R} ${R} 0 0 1 ${pt(b)}z`} fill="#E66C37" />
        <path d={`M${cx} ${cy}L${pt(b)}A${R} ${R} 0 0 1 ${pt(0)}z`} fill="#12239E" />
        <path d="M681 847L683 841.500H695 M643 854L640 851.500H628 M690.500 925.500L692 929.500H705" fill="none" stroke="#4a4a4a" />
        <X x={624.500} y={843.500} w={14.500} a="end" s={13} b={700}>3K</X>
        <X x={624.500} y={861} w={50} a="end" s={13} b={700}>(45.05%)</X>
        <X x={699} y={843} w={60} a="start" s={13} b={700}>0K (5.32%)</X>
        <X x={709} y={930} w={53} a="start" s={13} b={700}>3K (49....)</X>
      </Plot>
    </Tile>
  );
}

function SidePanel() {
  return (
    <Tile className="ml-auto w-[233px] h-[733px] font-bold text-[#0f68be]">
      <T w={130} className="mt-[238px] text-[38px] leading-[53px]">Twitter</T>
      <T w={165} className="text-[38px] leading-[53px]">Analytics</T>
      <T w={197} className="text-[38px] leading-[53px]">Dashboard</T>
      <div className="mt-[87px] flex h-[87px] w-[206px] flex-col items-center border-2 border-[#0f68be]">
        <T w={69} className="ml-[3px] mt-[3px] font-['Open_Sans',sans-serif] text-[19px] leading-[26px]">Month</T>
        <div className="mt-[10px] flex h-[30px] w-[183px] items-center border border-[#1e1e1e] pl-[6px] pr-[5px]">
          <T w={17} className="mt-[2px] font-['Open_Sans',sans-serif] text-[14px] font-normal leading-[20px]">All</T>
          <svg className="ml-auto mt-[1px]" width="16" height="10" viewBox="0 0 16 10" fill="none" stroke="#0f68be" strokeWidth="1.400">
            <path d="M.7 1L8 8.700 15.300 1" />
          </svg>
        </div>
      </div>
    </Tile>
  );
}

function Report() {
  return (
    <div className="flex h-[733px] w-[1377px] shrink-0 bg-[#333333]">
      <div className="w-[24px] bg-[#333333]" />
      <div className="w-[12px] bg-linear-to-r from-[#333333] to-[#7c7c7c]" />
      <div className="flex w-[1304px]">
        <div className="flex w-[1062px] shrink-0 flex-col">
          <div className="flex h-[201px]">
            <MediaChart />
            <div className="w-[4px]" />
            <TweetWeek />
            <div className="w-[8px]" />
            <CountWeek />
            <div className="w-[11px]" />
            <ImprWeek />
          </div>
          <div className="flex">
            <div className="flex w-[385px] shrink-0 flex-col">
              <div className="flex">
                <Kpis />
                <UrlChart />
              </div>
              <div className="mt-[3px] flex w-[449px] gap-[8px]">
                <Card className="w-[217px] h-[146px]" title="Impressions" tw={101} value="773.28" vw={172} />
                <Card className="w-[223px] h-[146px]" title="Tweet Count" tw={107} value="1.166K" vw={172} />
              </div>
            </div>
            <div className="ml-[8px] flex w-[320px] shrink-0 flex-col">
              <HighEngagement />
              <PieTile />
            </div>
            <div className="ml-[8px] flex flex-col">
              <TopTen />
              <AppOpens />
            </div>
          </div>
        </div>
        <SidePanel />
      </div>
      <div className="w-[12px] bg-linear-to-l from-[#333333] to-[#7c7c7c]" />
    </div>
  );
}

function PageTabs() {
  return (
    <div className="flex h-[44px] w-[1417px] shrink-0 bg-[#292929] text-[15px] leading-[20px] text-[#dcdcdc]">
      <div className="flex w-[160px] border-r border-[#6a6a6a]">
        <div className="ml-[13px] flex w-[30px] flex-col items-center pt-[8px]">
          <svg width="22" height="22" viewBox="0 0 22 22" fill="none" stroke="#f0f0f0" strokeWidth="2">
            <rect x="2" y="2" width="18" height="15" rx="2" />
            <path d="M4.500 20h13 M8 18v2 M14 18v2" strokeWidth="1.500" />
          </svg>
          <div className="mt-[5px] h-[4px] w-[30px] rounded-[2px] bg-[#2aac94]" />
        </div>
        <svg className="ml-[32px] mt-[6px]" width="15" height="24" viewBox="0 0 15 24" fill="none" stroke="#f0f0f0" strokeWidth="2">
          <rect x="1.500" y="1.500" width="11" height="21" rx="2" />
          <path d="M5 19.500h4" />
        </svg>
        <svg className="ml-[26px] mt-[15px]" width="36" height="13" viewBox="0 0 36 13" fill="none" stroke="#a8a8a8" strokeWidth="1.300">
          <path d="M7 1.500v10L2 6.500z M29 1.500v10l5-5z" />
        </svg>
      </div>
      <div className="flex w-[95px] justify-center border-r border-[#4a4a4a] pt-[12px]">
        <T w={44}>Page 1</T>
      </div>
      <div className="relative flex w-[97px] justify-center border-b-[5px] border-[#2aac94] pr-[2px] pt-[12px]">
        <T w={45} className="font-bold text-white">Page 2</T>
        <span className="absolute right-[6px] top-0 text-[13px] font-bold leading-[22px] text-white">x</span>
      </div>
      <div className="flex w-[49px] items-center justify-center bg-[#2aac94]">
        <svg className="-mt-[3px]" width="13" height="13" viewBox="0 0 13 13" stroke="#1c1c1c" strokeWidth="3.200">
          <path d="M6.500 0v13 M0 6.500h13" />
        </svg>
      </div>
    </div>
  );
}

/* ---------- filter rail ---------- */
function Filters() {
  return (
    <div className="flex h-[733px] w-[40px] shrink-0 flex-col items-center bg-white">
      <svg className="ml-[1px] mt-[18px]" width="10" height="10" viewBox="0 0 10 10" fill="none" stroke="#333" strokeWidth="1.500">
        <path d="M5 .5L1 5l4 4.500 M9 .5L5 5l4 4.500" />
      </svg>
      <svg className="ml-[9px] mt-[25px]" width="10" height="12" viewBox="0 0 10 12" fill="none" stroke="#333" strokeWidth="1.500">
        <path d="M9 0v12 M5.500 2v8 M2 4v4" />
      </svg>
      <span className="ml-[2px] mt-[12px] block text-[17.5px] font-semibold leading-[20px] text-[#2b2b2b] [writing-mode:vertical-rl]">
        Filters
      </span>
    </div>
  );
}

/* ---------- visualizations panel ---------- */
const AX = <path d="M1 0v23h23" stroke="#bdbdbd" />;
const B = "#0062b4";
const L = "#4ba0e0";
const bolt = <path d="M4 0h6L7.500 5h3L1 14l2.500-7H.5z" fill="#e8830c" stroke="#ffc069" strokeWidth=".8" />;

const VIZ = [
  <g>{AX}<path d="M1 4h6v5H1z M1 14h8v5H1z" /><path d="M7 4h8v5H7z" fill={B} stroke={L} /><path d="M9 14h11v5H9z" fill="#666" stroke="#999" /></g>,
  <g>{AX}<path d="M5 16h4v7H5z M15 11h4v12h-4z" /><path d="M5 8h4v8H5z" fill={B} stroke={L} /><path d="M15 4h4v7h-4z" fill="#666" stroke="#999" /></g>,
  <g>{AX}<path d="M1 2h21v4H1z" fill={B} stroke={L} /><path d="M1 6h13v4H1z M1 13h10v4H1z" stroke="#888" fill="#444" /><path d="M1 17h16v4H1z" /></g>,
  <g>{AX}<path d="M2 2h4v21H2z" fill={B} stroke={L} /><path d="M8 10h4v13H8z M12 13h4v10h-4z" fill="#555" stroke="#888" /><path d="M18 7h4v16h-4z" /></g>,
  <g>{AX}<path d="M1 4h4v5H1z M1 14h12v5H1z" /><path d="M5 4h15v5H5z" fill={B} stroke={L} /><path d="M13 14h6v5h-6z" fill="#666" stroke="#999" /></g>,
  <g>{AX}<path d="M5 18h4v5H5z M15 11h4v12h-4z" /><path d="M5 4h4v14H5z" fill={B} stroke={L} /><path d="M15 4h4v7h-4z" fill="#666" stroke="#999" /></g>,
  <g>{AX}<path d="M2 14l8-8 5 6 7-7" /><path d="M2 19l10-11 6 5 5-6" stroke={L} /></g>,
  <g><path d="M17 3l6 8v12h-8z" fill="#666" stroke="#999" /><path d="M1 14L8 2l8 12 M1 14v9" /><path d="M1 23l7-9 5 5 5-6 5 10z" fill={B} stroke={L} /></g>,
  <g>{AX}<path d="M2 5l6 5 8-7 3 3h4v10l-2 1-5-4-8 7-6-6z" fill={B} stroke={L} /></g>,
  <g>{AX}<path d="M2 4h21v13h-2l-5-6-8 7-6-6z" fill={B} stroke={L} /></g>,
  <g>{AX}<path d="M6 4h4v14H6z" fill={B} stroke={L} /><path d="M15 5h4v6h-4z" fill="#666" stroke="#999" /><path d="M6 18v5 M10 18v5 M15 14v9 M19 14v9 M2 20l7-8 6 5 8-8" /></g>,
  <g>{AX}<path d="M5 12h4v11H5z" fill={B} stroke={L} /><path d="M9 3h6v20 M9 3v9" /><path d="M15 8h4v15h-4z" fill="#555" stroke="#999" /><path d="M2 20l7-7 5 5 9-9" /></g>,
  <g>{AX}<path d="M3 4l6 4h5l7-4v6l-6 5h-4L3 10z" fill="#777" stroke="#aaa" /><path d="M3 14h18v6H3z" fill="#e8830c" stroke="#ffc069" /><path d="M3 11c4 0 4 6 9 6s5-6 9-6v4c-4 0-5 5-9 5s-5-5-9-5z" fill={B} stroke="#cfe6fa" /></g>,
  <g>{AX}<path d="M4 7h4v16 M8 7v7h5 M17 3h4v20h-4z" /><path d="M13 3h4 M13 3v11" stroke={L} strokeWidth="2" /><path d="M13 14v9" /></g>,
  <g fill={B} stroke={L}><path d="M1 2h22v6H1z M4 8h16v6H4z M7 14h10v7H7z" /></g>,
  <g>{AX}<g stroke="none"><path d="M4 5h3.500v3.500H4z M10 9h3.500v3.500H10z M16 14h3.500v3.500H16z" fill={B} /><path d="M16 1h4v4h-4z M4 15h4v4H4z" fill="#d6d6d6" /></g></g>,
  <g><circle cx="12" cy="12" r="11" /><path d="M12 1a11 11 0 0 1 8 19l-8-8z" fill={B} stroke={L} /></g>,
  <g><path fillRule="evenodd" d="M12 1a11 11 0 1 1-11 11h5a6 6 0 1 0 6-6z" fill={B} stroke={L} /><path d="M12 1A11 11 0 0 0 1 12h5a6 6 0 0 1 6-6z" stroke="#999" /></g>,
  <g><path d="M1 1h11v22H1z" fill={B} stroke={L} /><path d="M1 13h11" stroke={L} /><path d="M12 1h11v22H12z M12 7h11 M17 7v16 M17 15h6" /></g>,
  <g><circle cx="12" cy="10" r="7" /><path d="M8 7l5-3 2 4-4 3z M12 12l5-2-1 5-3 1z" fill="#2ea043" stroke="none" /><path d="M6 3c-5 6-1 15 6 16 3 0 5-1 7-3 M12 19v3 M5 23h14" /></g>,
  <g><path d="M1 1l9 3 4-3h9l-1 12-9 9-4-1-6-7z" fill="#666" stroke="#aaa" /><path d="M1 1h8v8l-7 2z M14 10h8l-1 6-8 5z" fill={B} stroke={L} /></g>,
  <g stroke="none"><path d="M16 -1L3 23l12-7z" fill="#4fb6dd" /><path d="M16 -1l6 26-7-9z" fill="#1c87b8" /></g>,
  <g><path d="M1 17a11 11 0 0 1 5-9l3 4a6 6 0 0 0-3 5z" stroke="#bbb" /><path d="M6 8a11 11 0 0 1 17 9h-5a6 6 0 0 0-9-5z" fill={B} stroke={L} /><path d="M11 17l6-6" strokeWidth="2" /></g>,
  <g><path d="M1 4h22v18H1z" /><text x="12" y="15.500" fontSize="10.500" fill={L} stroke="none" textAnchor="middle" fontFamily="Open Sans">123</text><path d="M4 19h16" stroke="#888" /></g>,
  <g><path d="M1 1h22v22H1z" /><path d="M5 4v16" stroke="#888" /><path d="M7 7h12 M7 14h12" stroke={L} strokeWidth="2" /><path d="M7 10.500h6 M7 17.500h6" stroke="#888" /></g>,
  <g><path d="M1 3h22v18H1z" /><path d="M4 12l4-6 4 6z" fill="#2ea043" stroke="none" /><path d="M13 6h7l-3.500 6z" fill="#e03131" stroke="none" /><path d="M4 17h16" stroke="#888" /></g>,
  <g><path d="M10 22H1V2h22v8 M1 5h22" stroke="#bbb" /><path d="M5 9h4v4H5z M5 16h4v3H5z" fill="#777" stroke="#999" /><path d="M12 13h11l-4 5v6h-3v-6z" /></g>,
  <g><path d="M1 1h22v22H1z M1 4.500h22 M1 11h22 M1 17h22 M8 5v18 M16 5v18" stroke="#bdbdbd" /></g>,
  <g><path d="M1 17h22v6H1z M16 5h7v18h-7z" fill={B} stroke={L} /><path d="M1 1h22v22H1z M1 4.500h22 M1 11h22 M1 17h22 M8 5v18 M16 5v18" stroke="#bdbdbd" /></g>,
  <text x="10" y="19" fontSize="19" fontWeight="500" fill={L} stroke="none" textAnchor="middle" fontFamily="Open Sans">R</text>,
  <text x="0" y="18" fontSize="20" fontWeight="500" fill={L} stroke="none" textLength="24" lengthAdjust="spacingAndGlyphs" fontFamily="Open Sans">Py</text>,
  <g>{AX}<path d="M1 5h17" stroke={L} strokeWidth="2" /><circle cx="20" cy="5" r="2.500" fill={B} stroke={L} /><path d="M1 11h10 M1 17h6" stroke="#999" /><circle cx="13.500" cy="11" r="2" stroke="#999" /><circle cx="9" cy="17" r="2" stroke="#999" /></g>,
  <g><path d="M9 12h6 M12 3v18 M12 3h3 M12 21h3" stroke="#bbb" /><path d="M1 9h8v6H1z M15 1h8v5h-8z M15 9h8v6h-8z M15 18h8v5h-8z" fill={B} stroke={L} /></g>,
  <path d="M1 2h22v15H10l-5 5v-5H1z" stroke={L} />,
  <g><path d="M3 5V1h11l6 6v16H3v-9 M14 1v6h6" /><circle cx="3.500" cy="9.500" r="2" fill={B} stroke={L} /><path d="M8 11h7 M6 15h7" stroke={L} /></g>,
  <g><path d="M6 1v8c0 4 2 6 6 6s6-2 6-6V1 M6 3H1c0 5 2 8 6 8 M18 3h5c0 5-2 8-6 8 M10 15v5 M14 15v5" /><path d="M6 1h12v3H6z M7 20h10v3H7z" fill={B} stroke={L} /></g>,
  <g><path d="M3 0.500h11l6 6V24H3z M14 .5v6h6" strokeWidth="1.700" /><path d="M6 16h3v6H6z M10.500 18h3v4h-3z M15 13h3v9h-3z" fill="#d6d6d6" stroke="none" /></g>,
  <g><path d="M12 4h11v18H2v-8" /><text x="14" y="16" fontSize="10" fill={L} stroke="none" textAnchor="middle" fontFamily="Open Sans">123</text><path d="M5 19h15" stroke="#888" />{bolt}</g>,
  <g><path d="M12 1h8v9h-8z M2 14h8v9H2z M10 10v4" stroke="#999" /><path d="M13 13h11l-4 5v6h-3v-6z" />{bolt}</g>,
  <g><path d="M2 13v10h13l-1-5 3-3v-4l5-3V1H9v4" fill="#0a4a85" stroke={L} strokeWidth="2" /><path d="M-1 3a4 4 0 0 1 7 0c0 4-2 6-3.500 10C1 9 -1 7 -1 3z" fill="#e8740c" stroke="none" /><circle cx="2.500" cy="4" r="1.300" fill="#141414" stroke="none" /><circle cx="20" cy="21" r="3.200" fill="#e8740c" stroke="none" /><circle cx="22.500" cy="14.500" r="1.600" fill="#e8740c" stroke="none" /></g>,
  <g stroke="#a32fb5"><path d="M7.500 3L12 1.500 16.500 3 23 12l-6.500 9-4.500 1.500L7.500 21 1 12z M7.500 3L12 8l4.500-5 M12 8l-5 4 5 4 5-4z M7.500 21L12 16l4.500 5" /></g>,
  <g stroke="#1583e0"><path d="M1 2h14l8 10-8 10H1l8-10z M10 22l9-15 M5 22L15 7" /></g>,
];

function Toggle({ on }) {
  return on ? (
    <div className="flex h-[20px] w-[40px] items-center rounded-full bg-[#2aac94] pl-[6px]">
      <T w={14} className="text-[10.5px] leading-[18px] text-[#1c1c1c]">On</T>
      <span className="ml-[4px] size-[10px] rounded-full bg-[#1f2a28]" />
    </div>
  ) : (
    <div className="flex h-[20px] w-[40px] items-center rounded-full border border-[#9a9a9a] pl-[5px]">
      <span className="size-[10px] rounded-full bg-[#b0b0b0]" />
      <T w={16} className="ml-[3px] text-[10.5px] leading-[18px] text-[#b0b0b0]">Off</T>
    </div>
  );
}

const Dbl = ({ className }) => (
  <svg className={className} width="10" height="10" viewBox="0 0 10 10" fill="none" stroke="#fff" strokeWidth="1.800">
    <path d="M1 .5L5 5 1 9.500 M5 .5L9 5 5 9.500" />
  </svg>
);

function VizPanel() {
  return (
    <div className="flex w-[227px] shrink-0 flex-col border-x border-[#666] text-white">
      <div className="flex h-[50px] items-center pl-[10px] pr-[13px]">
        <T w={124} className="text-[18px] font-semibold leading-[24px]">Visualizations</T>
        <Dbl className="ml-auto" />
      </div>
      <T w={77} className="ml-[10px] -mt-[2px] text-[14.5px] font-semibold leading-[20px]">Build visual</T>
      <div className="mt-[4px] flex h-[42px] pl-[10px]">
        <div className="flex size-[40px] items-center justify-center rounded-[3px] bg-[#2a2a2a]">
          <svg width="30" height="32" viewBox="0 0 30 32" fill="none" stroke="#bdbdbd" strokeWidth="1.400">
            <path d="M0 2h24" />
            <rect x="1" y="8" width="28" height="9.500" fill="#2aac94" strokeDasharray="2.500 1.500" />
            <rect x="1" y="21.500" width="28" height="9.500" fill="#2aac94" strokeDasharray="2.500 1.500" />
          </svg>
        </div>
        <svg className="ml-[48px] mt-[5px]" width="31" height="31" viewBox="0 0 31 31" fill="none" stroke="#bdbdbd" strokeWidth="1.400">
          <path d="M5 30H1V1h12l8 8v4" />
          <path d="M13 1l8 8v2h-8z" fill="#fff" stroke="none" />
          <path d="M30 12L18 24l-2-2z M16 22c-5 0-3 7-9 8 6 2 12 0 11-6z" />
        </svg>
      </div>
      <svg className="block shrink-0" width="225" height="14" viewBox="0 0 225 14" fill="none" stroke="#8a8a8a" strokeWidth="1.200">
        <path d="M0 13.500h20l9.500-10 9.500 10h186" />
      </svg>
      <div className="mt-[6px] grid grid-cols-[repeat(6,35px)] pl-[8px]">
        {VIZ.map((v, i) => (
          <div key={i} className="flex h-[35px] w-[35px] items-center justify-center">
            <svg width="24" height="24" viewBox="0 0 24 24" fill="none" stroke="#d0d0d0" strokeWidth="1.300" className="overflow-visible">{v}</svg>
          </div>
        ))}
      </div>
      <div className="flex h-[41px] gap-[2px] border-b border-[#d0d0d0] pl-[17px] pt-[15px]">
        <span className="size-[3px] rounded-full bg-white" />
        <span className="ml-[1px] size-[3px] rounded-full bg-white" />
        <span className="ml-[1px] size-[3px] rounded-full bg-white" />
      </div>
      <T w={42} className="ml-[15px] mt-[11px] text-[14.5px] leading-[20px]">Values</T>
      <div className="ml-[5px] mt-[7px] flex h-[35px] w-[213px] items-center border border-dashed border-[#7a7a7a] pl-[12px]">
        <T w={135} className="text-[14.5px] leading-[20px]">Add data fields here</T>
      </div>
      <T w={87} className="ml-[15px] mt-[14px] text-[14.5px] font-semibold leading-[20px]">Drill through</T>
      <div className="mt-[12px] flex h-[20px] items-center pl-[15px]">
        <T w={83} className="mr-[60px] text-[14.5px] leading-[20px]">Cross-report</T>
        <Toggle />
      </div>
      <div className="mt-[14px] flex h-[20px] items-center pl-[15px]">
        <T w={93} className="mr-[50px] -mt-[2px] text-[14.5px] leading-[20px]">Keep all filters</T>
        <Toggle on />
      </div>
      <div className="ml-[5px] mt-[12px] flex h-[32px] w-[213px] items-center border border-dashed border-[#8a8a8a] bg-black pl-[10px]">
        <T w={189} className="mt-[1px] text-[14.5px] leading-[20px]">Add drill-through fields here</T>
      </div>
    </div>
  );
}

/* ---------- data panel ---------- */
const FIELDS = [
  ["Date", 31, "d"], ["Day", 25, ""], ["detail expands", 96, "s"], ["engagement rate", 114, "s"], ["engagements", 90, "s"],
  ["hashtag clicks", 92, "s"], ["impressions", 79, "s"], ["likes", 29, "s"], ["media engage...", 106, "s"], ["media views", 81, "s"],
  ["Month", 45, ""], ["MonthName", 85, ""], ["Quarter", 51, ""], ["replies", 44, "s"], ["retweets", 57, "s"], ["Time", 33, ""],
  ["Tweet", 39, ""], ["url clicks", 57, "s"], ["user profile clicks", 114, "s"], ["Week", 37, ""], ["Year", 28, ""],
];

function DataPanel() {
  return (
    <div className="flex w-[225px] shrink-0 flex-col text-white">
      <div className="flex h-[50px] items-center pl-[10px] pr-[13px]">
        <T w={42} className="text-[18px] font-semibold leading-[24px]">Data</T>
        <Dbl className="ml-auto" />
      </div>
      <div className="ml-[5px] mt-[7px] flex h-[30px] w-[215px] items-center rounded-[4px] border border-[#8a8a8a] bg-[#1f1f1f] pl-[15px]">
        <svg width="18" height="18" viewBox="0 0 18 18" fill="none" stroke="#a0a0a0" strokeWidth="1.400">
          <circle cx="7.500" cy="7.500" r="6.500" />
          <path d="M12.500 12.500l5 5" />
        </svg>
        <T w={51} className="ml-[9px] mt-[1px] text-[16px] leading-[22px] text-[#9a9a9a]">Search</T>
      </div>
      <div className="mt-[12px] flex h-[30px] items-center pl-[19px] text-[14.5px] leading-[20px]">
        <svg width="10" height="7" viewBox="0 0 10 7" fill="none" stroke="#e0e0e0" strokeWidth="1.400">
          <path d="M.5 1L5 5.500 9.500 1" />
        </svg>
        <svg className="ml-[7px]" width="16" height="16" viewBox="0 0 16 16" fill="none" stroke="#d6d6d6" strokeWidth="1.400">
          <rect x="1" y="1" width="14" height="14" rx="2" />
          <path d="M1 5.500h14 M1 10.500h14 M5.500 1v14 M10.500 1v14" />
        </svg>
        <T w={80} className="ml-[6px] text-[#eee]">SocialMedia</T>
      </div>
      {FIELDS.map(([n, w, k]) => (
        <div key={n} className="flex h-[30px] items-center pl-[38px] text-[14.5px] leading-[20px] text-[#eee]">
          <svg width="8" height="10" viewBox="0 0 8 10" fill="none" stroke={k === "d" ? "#e0e0e0" : "none"} strokeWidth="1.500">
            <path d="M1.500 .5L6 5 1.500 9.500" />
          </svg>
          <span className="ml-[9px] size-[15px] rounded-[2px] border border-[#c8c8c8]" />
          <svg className="ml-[10px]" width="16" height="16" viewBox="0 0 16 16" fill="none" stroke="#d0d0d0" strokeWidth="1.400">
            {k === "s" && <path d="M14 1H2l6.500 6.500L2 14.800h12" />}
            {k === "d" && <path d="M3 1h10l2 2v10l-2 2H3l-2-2V3z M1 5h14 M4 8.500h1.500 M7.200 8.500h1.500 M10.500 8.500H12 M4 12h1.500 M7.200 12h1.500" />}
          </svg>
          <T w={w} className="ml-[6px]">{n}</T>
        </div>
      ))}
    </div>
  );
}

/* ---------- status bar ---------- */
function StatusBar() {
  return (
    <div className="flex h-[29px] shrink-0 items-center border-t border-[#666] text-[14px] leading-[20px] text-[#d6d6d6]">
      <T w={74} className="ml-[5px] mt-[2px]">Page 2 of 2</T>
      <svg className="ml-[1576px]" width="156" height="14" viewBox="0 0 156 14" fill="none" stroke="#d6d6d6" strokeWidth="1.200">
        <path d="M0 7.500h6 M144 7.500h9 M148.500 3v9" strokeWidth="1.800" />
        <path d="M12 7.500h125 M74 3.500v8" />
        <path d="M61.500 .5v13" strokeWidth="4.500" />
      </svg>
      <T w={29} className="ml-[14px]">81%</T>
      <svg className="ml-[24px] mt-[2px]" width="19" height="14" viewBox="0 0 19 14" fill="none" stroke="#d6d6d6" strokeWidth="1.500">
        <rect x="1" y="1" width="17" height="12" rx="2" />
        <path d="M7 4H4.500v2 M4.500 8v2H7 M12 4h2.500v2 M14.500 8v2H12" />
      </svg>
    </div>
  );
}

/* ---------- taskbar ---------- */
function Chrome({ tone, light }) {
  return (
    <svg width="36" height="46" viewBox="0 0 36 46" className="mt-[4px]">
      <circle cx="17" cy="22" r="14.500" fill="#fbc116" />
      <path d="M17 22L4.400 14.700A14.500 14.500 0 0 1 29.600 14.700z" fill="#ea4335" />
      <path d="M17 22l6.500 3.500-7 11A14.500 14.500 0 0 1 4.400 14.700l7 9z" fill="#34a853" />
      <circle cx="17" cy="22" r="7" fill="#fff" />
      <circle cx="17" cy="22" r="5.500" fill="#4285f4" />
      <circle cx="26" cy="12" r="8.500" fill={tone} />
      <circle cx="26" cy="9.500" r="3" fill={light} />
      <path d="M20 17a6.500 6 0 0 1 12 0z" fill={light} opacity=".6" />
      <rect x="13" y="42" width="8" height="4" rx="2" fill="#9a9c98" />
    </svg>
  );
}

function Taskbar() {
  return (
    <div className="flex h-[60px] shrink-0 items-center bg-[#20231d] pl-[659px] text-white">
      <svg className="mt-[1px]" width="31" height="30" viewBox="0 0 31 30">
        <defs>
          <linearGradient id="win" x1="0" y1="0" x2="1" y2="1"><stop offset="0" stopColor="#6fd6ff" /><stop offset="1" stopColor="#169be8" /></linearGradient>
        </defs>
        <path d="M0 0h14.500v14.500H0z M15.800 0h14.500v14.500H15.800z M0 15.500h14.500V30H0z M15.800 15.500h14.500V30H15.800z" fill="url(#win)" />
      </svg>
      <div className="ml-[16px] flex h-[40px] w-[125px] items-center rounded-full bg-[#2d302a] pl-[28px]">
        <svg width="19" height="19" viewBox="0 0 19 19" fill="none" stroke="#fff" strokeWidth="1.600">
          <circle cx="11.500" cy="7.500" r="6" />
          <path d="M7 12l-6 6" />
        </svg>
        <T w={45} className="ml-[6px] mt-[2px] text-[14.5px] leading-[20px]">Search</T>
      </div>
      <svg className="ml-[17px]" width="31" height="30" viewBox="0 0 31 30">
        <rect x="8" y="2" width="22" height="19" rx="2" fill="#e6e6e6" />
        <rect x="0" y="9" width="21" height="19" rx="2" fill="#7c7c7c" opacity=".9" />
      </svg>
      <svg className="ml-[24px]" width="30" height="30" viewBox="0 0 30 30">
        <rect x="0" y="1" width="30" height="28" rx="2" fill="#1272cc" />
        <rect x="3" y="4" width="11" height="22" rx="1" fill="#fff" />
        <rect x="16" y="4" width="11" height="12" rx="1" fill="#6cc8f7" />
        <rect x="16" y="18" width="11" height="8" rx="1" fill="#2e9bea" />
      </svg>
      <svg className="ml-[24px]" width="30" height="30" viewBox="0 0 30 30">
        <path d="M15 1a14 14 0 1 1-5 27l-9 1 2-8A14 14 0 0 1 15 1z" fill="#6b63c7" />
        <rect x="6" y="10" width="12" height="10.500" rx="2" fill="#fff" />
        <path d="M19.500 13.500l4-3v9l-4-3z" fill="#fff" />
      </svg>
      <svg className="ml-[25px]" width="32" height="30" viewBox="0 0 32 30">
        <path d="M0 3c0-1 1-2 2-2h9l4 4h14c1 0 2 1 2 2v5H0z" fill="#e3a01b" />
        <rect x="0" y="6" width="31" height="22" rx="2" fill="#fccb38" />
        <path d="M5 28v-6c0-1 1-2 2-2h17c1 0 2 1 2 2v6z" fill="#1272cc" />
        <path d="M10 24h11" stroke="#0a4f94" strokeWidth="1.500" />
      </svg>
      <div className="ml-[22px]"><Chrome tone="#2a1715" light="#75504a" /></div>
      <svg className="ml-[21px]" width="30" height="30" viewBox="0 0 30 30">
        <path d="M9 6V2.500h12V6" fill="none" stroke="#39a7e8" strokeWidth="2.500" />
        <rect x="0" y="5" width="30" height="25" rx="3" fill="#f0f0f0" />
        <path d="M9 12h5v5H9z" fill="#e34f2e" /><path d="M16 12h5v5h-5z" fill="#7eb726" /><path d="M9 18.500h5v5H9z" fill="#28a1e8" /><path d="M16 18.500h5v5h-5z" fill="#f9b814" />
      </svg>
      <div className="ml-[23px]"><Chrome tone="#58656b" light="#c2b9a6" /></div>
      <div className="ml-[11px] flex h-[50px] w-[50px] flex-col items-center rounded-[5px] border border-[#393b36] bg-[#30332d] pt-[9px]">
        <svg width="26" height="31" viewBox="0 0 26 31">
          <rect x="13" y="0" width="11" height="31" rx="1.500" fill="#c98f09" />
          <rect x="7" y="8" width="11" height="23" rx="1.500" fill="#e9b929" />
          <rect x="1" y="15" width="11" height="16" rx="1.500" fill="#f8d95c" />
        </svg>
        <span className="mt-[4px] h-[4px] w-[20px] rounded-full bg-[#4cc2ff]" />
      </div>
      <svg className="ml-[303px]" width="17" height="10" viewBox="0 0 17 10" fill="none" stroke="#fff" strokeWidth="1.300">
        <path d="M1 9l7.500-8L16 9" />
      </svg>
      <svg className="ml-[11px]" width="20" height="20" viewBox="0 0 20 20">
        <circle cx="10" cy="10" r="10" fill="#ff7800" />
        <path d="M8.500 4c1-1.500 3-1 3.500.5L15 13c.5 2-1.500 3-3 2L9 12.500 7 15c-1 1-3 0-2.300-1.500z" fill="#fff" />
        <path d="M10.500 6l3 7M8.500 7.500l3.500 6" stroke="#ff7800" strokeWidth="1" />
      </svg>
      <div className="ml-[18px] mt-[1px] flex w-[30px] flex-col items-center text-[14.5px] leading-[20px]">
        <T w={29}>ENG</T>
        <T w={15}>IN</T>
      </div>
      <svg className="ml-[21px]" width="22" height="17" viewBox="0 0 22 17" fill="none" stroke="#fff" strokeWidth="1.500">
        <path d="M1 6c6-6 14-6 20 0 M4 9.500c4-4 10-4 14 0 M7.500 12.500c2-2 5-2 7 0" />
        <circle cx="11" cy="15" r="1.500" fill="#fff" stroke="none" />
      </svg>
      <svg className="ml-[9px]" width="20" height="18" viewBox="0 0 20 18" fill="none" stroke="#fff" strokeWidth="1.400">
        <path d="M1 6h3l5-4v14l-5-4H1z M12 6c1.500 2 1.500 4 0 6 M14.500 3.500c3 3.500 3 7.500 0 11 M17 1.500c3.500 4.500 3.500 10.500 0 15" />
      </svg>
      <svg className="ml-[10px]" width="21" height="14" viewBox="0 0 21 14" fill="none" stroke="#fff" strokeWidth="1.400">
        <rect x="1" y="1" width="16.500" height="12" rx="3" />
        <rect x="3.500" y="3.500" width="11.500" height="7" rx="1" fill="#fff" stroke="none" />
        <path d="M19.500 5v4" strokeWidth="2" />
      </svg>
      <div className="ml-[18px] flex w-[74px] flex-col items-end text-[14px] leading-[20px]">
        <T w={64}>09:44 AM</T>
        <T w={73}>20-11-2024</T>
      </div>
      <div className="ml-[9px] flex size-[20px] items-center justify-center rounded-full bg-[#4cc2ff] text-[12px] leading-none text-[#111]">2</div>
    </div>
  );
}

export default function App() {
  return (
    <div className="flex h-[1080px] w-[1920px] flex-col overflow-hidden bg-[#141414] font-['Open_Sans','Noto_Sans',sans-serif]">
      <TitleBar />
      <MenuBar />
      <Ribbon />
      <div className="flex h-[777px] shrink-0">
        <Rail />
        <div className="flex w-[1417px] shrink-0 flex-col">
          <div className="flex">
            <Report />
            <Filters />
          </div>
          <PageTabs />
        </div>
        <VizPanel />
        <DataPanel />
      </div>
      <StatusBar />
      <div className="flex h-px shrink-0 bg-black">
        <div className="ml-[944px] flex-1 bg-white" />
      </div>
      <Taskbar />
    </div>
  );
}
